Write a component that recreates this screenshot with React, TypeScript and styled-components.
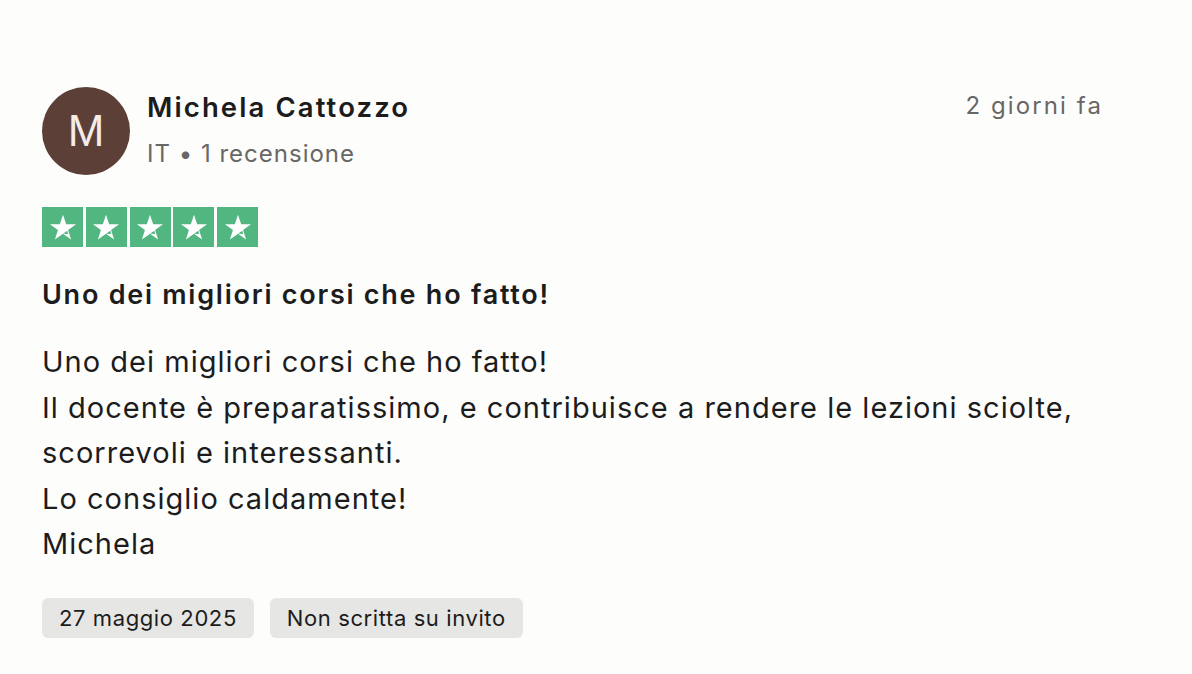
import styled, { createGlobalStyle } from 'styled-components';

const GlobalStyle = createGlobalStyle`
  html, body {
    margin: 0;
    padding: 0;
    background: #fdfdfc;
  }
  body {
    font-family: Inter, "Noto Sans", "Liberation Sans", sans-serif;
    color: #1c1c1c;
  }
`;

const review = {
    initial: 'M',
    name: 'Michela Cattozzo',
    country: 'IT',
    reviews: '1 recensione',
    ago: '2 giorni fa',
    rating: 5,
    title: 'Uno dei migliori corsi che ho fatto!',
    body: [
        'Uno dei migliori corsi che ho fatto!',
        'Il docente è preparatissimo, e contribuisce a rendere le lezioni sciolte,',
        'scorrevoli e interessanti.',
        'Lo consiglio caldamente!',
        'Michela',
    ],
    tags: ['27 maggio 2025', 'Non scritta su invito'],
};

const Star = () => (
    <svg width="28" height="28" viewBox="0 0 24 24" aria-hidden="true">
        <path
            d="M12 1.6l2.75 8.05h8.45l-6.85 4.95 2.6 8.1L12 17.7l-6.95 5 2.6-8.1L0.8 9.65h8.45z"
            fill="#fff"
        />
        <path d="M15.6 15.2l0.9 2.7L12 17.7z" fill="#52b681" />
    </svg>
);

const App = () => {
    return (
        <>
            <GlobalStyle />
            <Card>
                <Header>
                    <Avatar>{review.initial}</Avatar>
                    <Who>
                        <Name>{review.name}</Name>
                        <Meta>
                            {review.country} • {review.reviews}
                        </Meta>
                    </Who>
                    <Ago>{review.ago}</Ago>
                </Header>

                <Stars>
                    {Array.from({ length: 5 }).map((_, i) => (
                        <StarBox key={i} $on={i < review.rating}>
                            <Star />
                        </StarBox>
                    ))}
                </Stars>

                <Title>{review.title}</Title>

                <Body>
                    {review.body.map((line, i) => (
                        <div key={i}>{line}</div>
                    ))}
                </Body>

                <Tags>
                    {review.tags.map((tag) => (
                        <Tag key={tag}>{tag}</Tag>
                    ))}
                </Tags>
            </Card>
        </>
    );
};

const Card = styled.article`
    box-sizing: border-box;
    width: 1192px;
    min-height: 674px;
    padding: 87px 89px 0 42px;
    background: #fdfdfc;
`;

const Header = styled.header`
    display: flex;
    align-items: flex-start;
    gap: 17px;
`;

const Avatar = styled.div`
    flex: none;
    width: 88px;
    height: 88px;
    border-radius: 50%;
    background: #5c3f36;
    color: #f3ece9;
    display: flex;
    align-items: center;
    justify-content: center;
    font-family: "Liberation Sans", Arial, sans-serif;
    font-size: 44px;
    font-weight: 400;
    line-height: 1;
`;

const Who = styled.div`
    flex: 1;
    display: flex;
    flex-direction: column;
    padding-top: 3px;
`;

const Name = styled.div`
    font-size: 27.5px;
    font-weight: 600;
    letter-spacing: 2.1px;
    line-height: 34px;
    color: #1c1c1c;
`;

const Meta = styled.div`
    margin-top: 15px;
    font-size: 24px;
    line-height: 30px;
    color: #676765;
    letter-spacing: 1px;
`;

const Ago = styled.div`
    padding-top: 4px;
    font-size: 24px;
    line-height: 30px;
    color: #676765;
    letter-spacing: 2.1px;
`;

const Stars = styled.div`
    display: flex;
    gap: 2.75px;
    margin-top: 32px;
`;

const StarBox = styled.div<{ $on: boolean }>`
    width: 41px;
    height: 40px;
    display: flex;
    align-items: center;
    justify-content: center;
    background: ${(p) => (p.$on ? '#52b681' : '#dcdce6')};
`;

const Title = styled.h2`
    margin: 32px 0 0;
    font-size: 27px;
    font-weight: 600;
    line-height: 32px;
    letter-spacing: 1.75px;
    color: #1c1c1c;
`;

const Body = styled.div`
    margin-top: 28px;
    font-size: 29px;
    line-height: 45.5px;
    color: #1c1c1c;
    letter-spacing: 1.02px;
`;

const Tags = styled.div`
    display: flex;
    gap: 16px;
    margin-top: 31px;
`;

const Tag = styled.span`
    display: inline-flex;
    align-items: center;
    height: 40px;
    padding: 0 17px;
    border-radius: 6px;
    background: #e6e6e4;
    font-size: 22px;
    color: #1c1c1c;
    letter-spacing: 0.6px;
`;

export default App;
